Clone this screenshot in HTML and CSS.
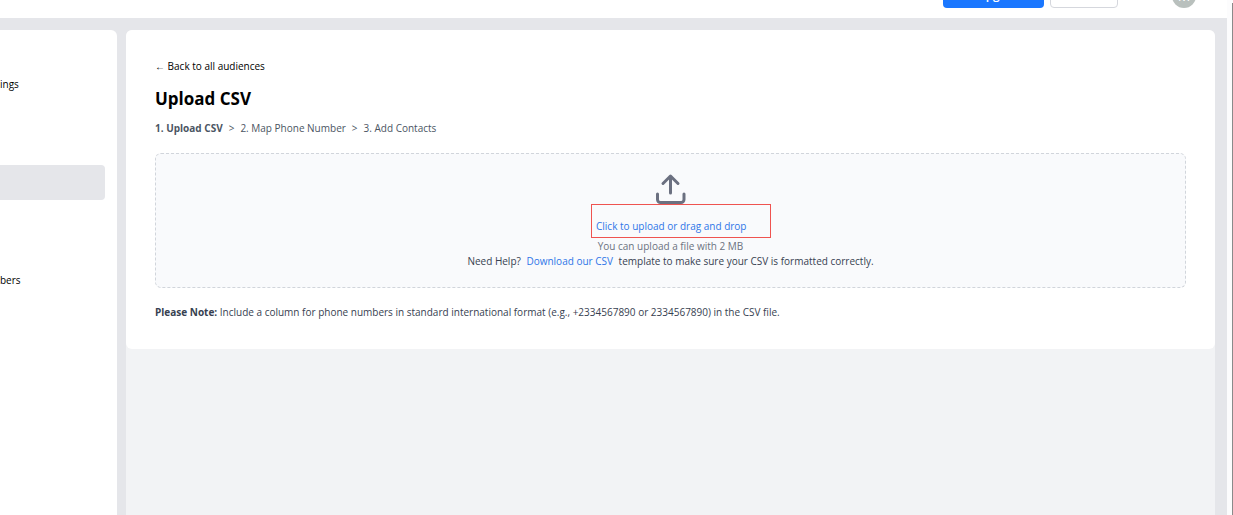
FILE: index.html
```html
<!DOCTYPE html>
<html lang="en">

<head>
    <meta charset="UTF-8">
    <meta name="viewport" content="width=device-width, initial-scale=1.0">
    <title>Upload CSV</title>
    <link rel="stylesheet" href="styles.css">
</head>

<body>
    <div class="app">
        <header class="topbar">
            <button class="btn btn-primary" type="button">Upgrade</button>
            <button class="btn btn-outline" type="button"></button>
            <span class="avatar">M</span>
        </header>
        <div class="layout">
            <nav class="sidebar">
                <a class="nav-link" href="#">ings</a>
                <a class="nav-link active" href="#"></a>
                <a class="nav-link" href="#">bers</a>
            </nav>
            <main class="content">
                <section class="card">
                    <a class="back" href="#">← Back to all audiences</a>
                    <h1>Upload CSV</h1>
                    <div class="steps">
                        <strong>1. Upload CSV</strong>
                        <span>&gt;</span>
                        <span>2. Map Phone Number</span>
                        <span>&gt;</span>
                        <span>3. Add Contacts</span>
                    </div>
                    <div class="dropzone">
                        <svg class="upload-icon" viewBox="0 0 32 32" fill="none" stroke="#6b7080" stroke-width="3" stroke-linecap="round" stroke-linejoin="round">
                            <path d="M15.500 21V4M8 11.500L15.500 4l7.500 7.500M2.500 22v5.500a3 3 0 0 0 3 3h20.500a3 3 0 0 0 3-3V22" />
                        </svg>
                        <div class="highlight">
                            <button class="upload-btn" type="button">Click to upload or drag and drop</button>
                        </div>
                        <p class="limit">You can upload a file with 2 MB</p>
                        <p class="help">Need Help? <a href="#">Download our CSV</a> template to make sure your CSV is formatted correctly.</p>
                    </div>
                    <p class="note"><strong>Please Note:</strong> Include a column for phone numbers in standard international format (e.g., +2334567890 or 2334567890) in the CSV file.</p>
                </section>
            </main>
        </div>
    </div>
</body>

</html>
```
FILE: styles.css
```css
* {
    box-sizing: border-box;
}

body {
    margin: 0;
    height: 100vh;
    padding-right: 6px;
    background: linear-gradient(#8a8a8a, #8a8a8a) right 3px / 1px 100% no-repeat #fcfcfd;
    font-family: "Open Sans", "Noto Sans", sans-serif;
    font-size: 10px;
    line-height: 15px;
    color: #374151;
    overflow: hidden;
}

a {
    color: #2f76e8;
    text-decoration: none;
}

p,
h1 {
    margin: 0;
}

.app {
    display: flex;
    flex-direction: column;
    height: 100%;
    background: #e5e6ea;
}

/* top bar */
.topbar {
    display: flex;
    justify-content: flex-end;
    align-items: flex-end;
    height: 18px;
    flex-shrink: 0;
    padding: 0 31px 10px 0;
    background: #fff;
}

.btn {
    height: 28px;
    flex-shrink: 0;
    border-radius: 4px;
    font-family: inherit;
    font-size: 12px;
    line-height: 16px;
    font-weight: 600;
}

.btn-primary {
    width: 101px;
    border: none;
    padding: 2px 0 0 16px;
    background: #1a77ff;
    color: #fff;
}

.btn-outline {
    width: 68px;
    margin: 0 54px 0 6px;
    border: 1px solid #d5d7dd;
    background: #fff;
}

.avatar {
    width: 24px;
    height: 24px;
    border-radius: 50%;
    background: #b9c0bd;
    color: #fff;
    font-size: 14px;
    line-height: 24px;
    text-align: center;
}

/* columns */
.layout {
    display: flex;
    flex: 1;
    gap: 9px;
    padding: 12px 12px 0 0;
}

.sidebar {
    width: 117px;
    padding: 37px 12px 0 0;
    background: #fff;
    border-radius: 0 6px 0 0;
}

.nav-link {
    display: flex;
    align-items: center;
    height: 35px;
    margin-bottom: 63px;
    color: #000;
}

.nav-link.active {
    background: #e5e6ea;
    border-radius: 0 4px 4px 0;
}

.content {
    flex: 1;
    background: #f2f3f5;
    border-radius: 6px 6px 0 0;
}

.card {
    padding: 29px;
    background: #fff;
    border-radius: 6px;
}

.back {
    display: block;
    color: #000;
}

h1 {
    margin-top: 12px;
    font-size: 17px;
    line-height: 26px;
    font-weight: 700;
    color: #000;
}

.steps {
    display: flex;
    gap: 6px;
    margin: 9px 0 17px;
    color: #4b5563;
}

/* upload area */
.dropzone {
    display: flex;
    flex-direction: column;
    align-items: center;
    padding: 18px 16px;
    border: 1px dashed #d1d5db;
    border-radius: 6px;
    background: #f9fafc;
}

.upload-icon {
    width: 32px;
    height: 32px;
}

.highlight {
    width: 180px;
    height: 34px;
    margin-left: 21px;
    padding: 14px 4px 0;
    border: 1px solid #ef5350;
}

.upload-btn {
    display: block;
    padding: 0;
    border: none;
    background: none;
    font: inherit;
    color: #2f76e8;
}

.limit {
    margin-top: 1px;
    color: #6b7280;
}

.help a {
    margin: 0 3px;
}

.note {
    margin-top: 17px;
}
```
